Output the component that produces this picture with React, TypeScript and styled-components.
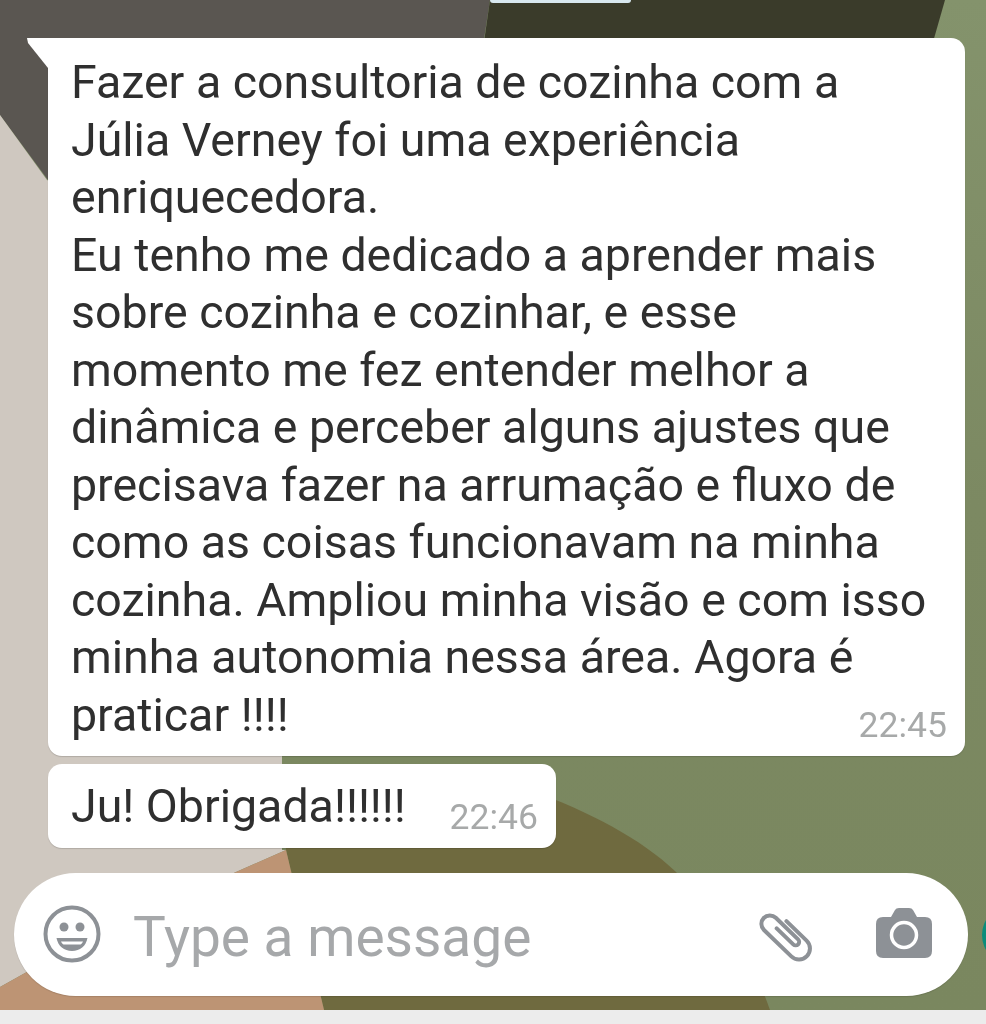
import React from 'react'
import styled, { createGlobalStyle } from 'styled-components'

const GlobalStyle = createGlobalStyle`
  html, body {
    margin: 0;
    padding: 0;
    background: #ececec;
  }
`

const App = () => {
  return (
    <Screen>
      <GlobalStyle />
      <Wallpaper viewBox="0 0 986 1010" aria-hidden="true">
        <defs>
          <linearGradient id="greenWall" x1="0" y1="0" x2="0" y2="1">
            <stop offset="0" stopColor="#84936c" />
            <stop offset="0.5" stopColor="#7c8962" />
            <stop offset="1" stopColor="#7a875f" />
          </linearGradient>
        </defs>
        <rect width="986" height="1010" fill="url(#greenWall)" />
        <polygon points="0,0 490,0 470,130 48,300 48,180 0,115" fill="#5a5651" />
        <polygon points="490,0 945,0 925,70 480,70" fill="#3a3b2a" />
        <polygon points="0,115 47,180 282,300 282,850 286,850 236,872 25,973 0,987" fill="#cfc8c0" />
        <path d="M282 790 H530 C590 812 640 838 676 872 Q750 950 770 1010 H324 L286 850 Z" fill="#6f6a3f" />
        <polygon points="286,850 324,1010 0,1010 0,987 25,973 236,872" fill="#bd9474" />
      </Wallpaper>
      <SendEdge />
      <TopChip />

      <Messages>
        <Bubble $tail>
          <MessageText>
            Fazer a consultoria de cozinha com a<br />
            Júlia Verney foi uma experiência<br />
            enriquecedora.<br />
            Eu tenho me dedicado a aprender mais<br />
            sobre cozinha e cozinhar, e esse<br />
            momento me fez entender melhor a<br />
            dinâmica e perceber alguns ajustes que<br />
            precisava fazer na arrumação e fluxo de<br />
            como as coisas funcionavam na minha<br />
            cozinha. Ampliou minha visão e com isso<br />
            minha autonomia nessa área. Agora é<br />
            praticar !!!!
          </MessageText>
          <Time>22:45</Time>
        </Bubble>
        <Bubble>
          <MessageText>Ju! Obrigada!!!!!!</MessageText>
          <Time>22:46</Time>
        </Bubble>
      </Messages>

      <InputBar>
        <IconSlot>
          <svg width="60" height="60" viewBox="0 0 60 60">
            <circle cx="30" cy="30" r="26.5" fill="none" stroke="#8d9196" strokeWidth="4" />
            <circle cx="22" cy="23" r="4.5" fill="#8d9196" />
            <circle cx="38" cy="23" r="4.5" fill="#8d9196" />
            <path d="M14.5 34 H45.5 C44 42 38 47 30 47 C22 47 16 42 14.5 34 Z" fill="#8d9196" />
            <path d="M19 37.5 H41 C40 39.5 39.5 40 38.5 40.5 H21.5 C20.5 40 20 39.5 19 37.5 Z" fill="#ffffff" />
          </svg>
        </IconSlot>
        <Placeholder>Type a message</Placeholder>
        <ClipSlot>
          <svg width="60" height="56" viewBox="-30 -28 60 56">
            <path
              d="M10 -15 V13 A11 11 0 0 1 -12 13 V-25 A8.5 8.5 0 0 1 5 -25 V6 A3.5 3.5 0 0 1 -2 6 V-17"
              transform="translate(2 2) rotate(-46) translate(1 5)"
              fill="none"
              stroke="#8d9196"
              strokeWidth="4"
              strokeLinecap="round"
            />
          </svg>
        </ClipSlot>
        <CameraSlot>
          <svg width="56" height="50" viewBox="0 0 56 50">
            <path
              d="M7 9 H15 L19 2 Q20 0 23 0 H33 Q36 0 37 2 L41 9 H49 Q56 9 56 16 V43 Q56 50 49 50 H7 Q0 50 0 43 V16 Q0 9 7 9 Z"
              fill="#8d9196"
            />
            <circle cx="28" cy="27" r="12.5" fill="none" stroke="#ffffff" strokeWidth="3.5" />
          </svg>
        </CameraSlot>
      </InputBar>
      <BottomStrip />
    </Screen>
  )
}

export default App

const Screen = styled.div`
  position: relative;
  width: 986px;
  height: 1024px;
  overflow: hidden;
  display: flex;
  flex-direction: column;
  font-family: Roboto, 'Liberation Sans', sans-serif;
  filter: blur(0.5px);
`

const Wallpaper = styled.svg`
  position: absolute;
  top: 0;
  left: 0;
  width: 986px;
  height: 1010px;
`

const TopChip = styled.div`
  position: absolute;
  top: 0;
  left: 490px;
  width: 141px;
  height: 3px;
  background: #d8e8ef;
  border-radius: 0 0 6px 6px;
`

const SendEdge = styled.div`
  position: absolute;
  top: 905px;
  left: 982px;
  width: 60px;
  height: 60px;
  border-radius: 50%;
  background: #0b8c7b;
`

const Messages = styled.div`
  position: relative;
  display: flex;
  flex-direction: column;
  align-items: flex-start;
  gap: 8px;
  padding: 38px 0 0 48px;
`

const Bubble = styled.div<{ $tail?: boolean }>`
  position: relative;
  display: flex;
  align-items: flex-end;
  box-sizing: border-box;
  width: ${p => (p.$tail ? '917px' : '508px')};
  height: ${p => (p.$tail ? '718px' : '84px')};
  padding: ${p => (p.$tail ? '16px 18px 12px 23px' : '14px 18px 12px 23px')};
  background: #ffffff;
  border-radius: ${p => (p.$tail ? '0 14px 14px 14px' : '14px')};
  box-shadow: 0 1px 1px rgba(0, 0, 0, 0.15);

  ${p =>
    p.$tail &&
    `&::before {
      content: '';
      position: absolute;
      top: 0;
      left: -21px;
      width: 21px;
      height: 30px;
      background: #ffffff;
      clip-path: polygon(0 0, 100% 0, 100% 100%, 1px 5px);
    }`}
`

const MessageText = styled.div`
  flex: 1 1 0;
  min-width: 0;
  align-self: flex-start;
  font-size: 46.5px;
  line-height: 57.5px;
  color: #2f2f2f;
  white-space: nowrap;
`

const Time = styled.span`
  flex-shrink: 0;
  font-size: 35.5px;
  line-height: 38px;
  color: #a7a9a9;
  white-space: nowrap;
`

const InputBar = styled.div`
  position: absolute;
  top: 873px;
  left: 14px;
  display: flex;
  align-items: center;
  box-sizing: border-box;
  width: 954px;
  height: 123px;
  padding-left: 28px;
  background: #ffffff;
  border-radius: 62px;
  box-shadow: 0 1px 1px rgba(0, 0, 0, 0.12);
`

const IconSlot = styled.div`
  display: flex;
  width: 60px;
  height: 60px;
  margin-top: -2px;
`

const ClipSlot = styled.div`
  display: flex;
  margin-left: auto;
  margin-right: 62px;
  margin-top: -2px;
`

const CameraSlot = styled.div`
  display: flex;
  margin-right: 36px;
  margin-top: -4px;
`

const Placeholder = styled.div`
  margin-left: 31px;
  padding-top: 4px;
  font-size: 55px;
  line-height: 60px;
  color: #a6a8aa;
`

const BottomStrip = styled.div`
  position: absolute;
  left: 0;
  right: 0;
  bottom: 0;
  height: 14px;
  background: #ececec;
`
